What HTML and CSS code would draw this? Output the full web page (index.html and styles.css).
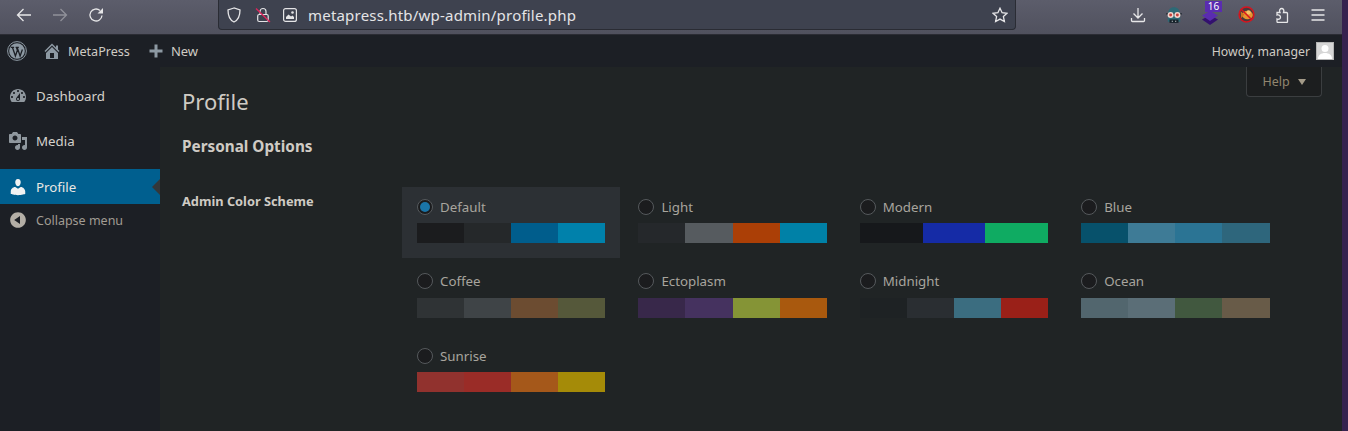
FILE: index.html

```html
<!DOCTYPE html>
<html lang="en">
<head>
<meta charset="UTF-8"/>
<title>Profile</title>
<link rel="stylesheet" href="styles.css">
</head>
<body>
<div id="wrapper">
	<div class="toolbar">
		<span class="slot"><svg width="16" height="16" viewBox="0 0 16 16" class="line"><path d="M15 8H1.500M7.500 2 1.500 8l6 6"/></svg></span>
		<span class="slot faded"><svg width="16" height="16" viewBox="0 0 16 16" class="line"><path d="M1 8h13.500M8.500 2l6 6-6 6"/></svg></span>
		<span class="slot"><svg width="16" height="16" viewBox="0 0 16 16" class="line"><path d="M14 8.500A6 6 0 1 1 12 3.500"/><path class="solid" d="M15 1v5.500H9.500z"/></svg></span>
		<div class="urlbar">
			<svg class="line shield" width="16" height="16" viewBox="0 0 16 16"><path d="M8 1 2 3c0 6 1.500 10 6 12 4.500-2 6-6 6-12z"/></svg>
			<svg class="lock" width="16" height="16" viewBox="0 0 16 16"><rect x="2.700" y="7.500" width="10.500" height="7" rx="1.500" fill="none" stroke="#e4e4e6" stroke-width="1.200"/><path d="M5 7.500V4.500a3 3 0 0 1 6 0v3" fill="none" stroke="#e4e4e6" stroke-width="1.200"/><path d="M1 1.500 15 15" stroke="#e0255d" stroke-width="1.300"/></svg>
			<svg class="picture" width="14" height="14" viewBox="0 0 14 14"><rect x=".6" y=".6" width="12.800" height="12.800" rx="2" fill="none" stroke="#e4e4e6" stroke-width="1.200"/><circle cx="9.500" cy="4.500" r="1.300" fill="#e4e4e6"/><path d="M3 11V9l2.500-2.500L8 8.500l1.500-1L11 9v2z" fill="#e4e4e6"/></svg>
			<span class="url">metapress.htb/wp-admin/profile.php</span>
			<svg class="line star" width="16" height="16" viewBox="0 0 16 16"><path d="m8 1.200 2.100 4.500 4.900.6-3.600 3.300 1 4.900L8 12.100l-4.400 2.400 1-4.900L1 6.300l4.900-.6z"/></svg>
		</div>
		<div class="tools">
			<span class="slot"><svg width="16" height="16" viewBox="0 0 16 16" class="line"><path d="M8 1v10M3.500 6.500 8 11l4.500-4.500M1.500 11v2.500q0 1 1 1h11q1 0 1-1V11"/></svg></span>
			<span class="slot"><svg width="18" height="18" viewBox="0 0 16 16"><path d="M2.500 8C2.500 3 5 1 8 1s5.500 2 5.500 7v6h-11z" fill="#2d6a76"/><rect x="4" y="12" width="8" height="3" fill="#16222a"/><path d="M6 13h1v1H6zm3 0h1v1H9z" fill="#cfd4d6"/><path d="M1 7h14" stroke="#16222a"/><circle cx="5" cy="8" r="2.700" fill="#f3d6cf"/><circle cx="11" cy="8" r="2.700" fill="#f3d6cf"/><circle cx="5" cy="8" r="1.300" fill="#c5403c"/><circle cx="11" cy="8" r="1.300" fill="#c5403c"/></svg></span>
			<span class="slot badged">
				<svg class="stack" width="16" height="14" viewBox="0 0 16 14"><path d="M8 4 16 8.500 8 14 0 8.500z" fill="#33116e"/><path d="M8 0 16 4.500 8 10 0 4.500z" fill="#5a2cb0"/></svg>
				<span class="badge">16</span>
			</span>
			<span class="slot"><svg width="17" height="17" viewBox="0 0 16 16"><circle cx="8" cy="8" r="7" fill="#4a3a3c"/><ellipse cx="9" cy="8.500" rx="5" ry="4" fill="#e8932e"/><path d="M2.500 5 6 8l-3 3.500z" fill="#d0731e"/><circle cx="10" cy="6" r="2" fill="#f4c06a"/><circle cx="8" cy="8" r="7" fill="none" stroke="#d8141e" stroke-width="1.400"/><path d="m3 3 10 10" stroke="#d8141e" stroke-width="1.400"/></svg></span>
			<span class="slot"><svg width="16" height="16" viewBox="0 0 16 16" class="line"><path d="M1.500 8V5.500h3c-1.200-2.500.2-4 1.700-4s2.800 1.500 1.800 4h3a1 1 0 0 1 1 1v8a1 1 0 0 1-1 1H2.500a1 1 0 0 1-1-1v-2.500c2.500.8 3.500-.5 3.500-1.700S4 7.200 1.500 8z" transform="translate(1.500 0)"/></svg></span>
			<span class="slot"><svg width="16" height="16" viewBox="0 0 16 16" class="line"><path d="M1.500 3h13M1.500 8h13M1.500 13h13"/></svg></span>
		</div>
	</div>

	<div class="adminbar">
		<div class="barleft">
			<svg class="wplogo" width="20" height="20" viewBox="0 0 20 20"><circle cx="10" cy="10" r="9.400" fill="none" stroke="#8d99a3" stroke-width="1"/><circle cx="10" cy="10" r="7.800" fill="#8d99a3"/><path d="M3.900 6.300h3.200M5.400 6.300l3 8.700 2-5.800-1-2.900M8.600 6.300h3.200M10.100 6.300l3 8.700 2.300-6.500" fill="none" stroke="#1c1f25" stroke-width="1.300"/></svg>
			<a class="baritem home"><svg width="20" height="20" viewBox="0 0 20 20"><path d="M16 8.500l1.530 1.530-1.060 1.060L10 4.620l-6.470 6.470-1.060-1.060L10 2.500l4 4v-2h2v4zm-6-2.460l6 5.990V18H4v-5.970zM12 17v-5H8v5h4z"/></svg>MetaPress</a>
			<a class="baritem new"><svg width="16" height="16" viewBox="0 0 16 16"><path d="M6.500 1.500h3v5h5v3h-5v5h-3v-5h-5v-3h5z"/></svg>New</a>
		</div>
		<div class="howdy">Howdy, manager
			<svg class="avatar" width="18" height="18" viewBox="0 0 18 18"><rect width="18" height="18" fill="#b5b5b5"/><rect x="1" y="1" width="16" height="16" fill="#d6d6d6"/><circle cx="9" cy="6.500" r="3.500" fill="#fff"/><path d="M2 17c0-4 3-6 7-6s7 2 7 6z" fill="#fff"/></svg>
		</div>
	</div>

	<div class="main">
		<div class="sidebar">
			<ul class="menu">
				<li><svg width="20" height="20" viewBox="0 0 20 20"><path d="M3.760 16h12.480c1.100-1.370 1.760-3.110 1.760-5 0-4.420-3.580-8-8-8s-8 3.580-8 8c0 1.890.66 3.630 1.760 5zM10 4c.55 0 1 .45 1 1s-.45 1-1 1-1-.45-1-1 .45-1 1-1zM6 6c.55 0 1 .45 1 1s-.45 1-1 1-1-.45-1-1 .45-1 1-1zm8 0c.55 0 1 .45 1 1s-.45 1-1 1-1-.45-1-1 .45-1 1-1zm-5.370 5.550L12 7v6c0 1.100-.9 2-2 2s-2-.9-2-2c0-.57.24-1.080.63-1.450zM4 10c.55 0 1 .45 1 1s-.45 1-1 1-1-.45-1-1 .45-1 1-1zm12 0c.55 0 1 .45 1 1s-.45 1-1 1-1-.45-1-1 .45-1 1-1zm-5 3c0-.55-.45-1-1-1s-1 .45-1 1 .45 1 1 1 1-.45 1-1z"/></svg>Dashboard</li>
				<li><svg width="20" height="20" viewBox="0 0 20 20"><path d="M13 11V4c0-.55-.45-1-1-1h-1.670L9 1H5L3.670 3H2c-.55 0-1 .45-1 1v7c0 .55.45 1 1 1h10c.55 0 1-.45 1-1zM7 4.500c1.380 0 2.500 1.120 2.500 2.500S8.380 9.500 7 9.500 4.500 8.380 4.500 7 5.620 4.500 7 4.500zM14 6h5v10.500c0 1.380-1.120 2.500-2.500 2.500S14 17.880 14 16.500s1.120-2.500 2.500-2.500c.17 0 .34.02.5.05V9h-3V6zm-4 8.050V13h2v3.500c0 1.380-1.120 2.500-2.500 2.500S7 17.880 7 16.500 8.120 14 9.500 14c.17 0 .34.02.5.05z"/></svg>Media</li>
				<li class="current"><svg width="20" height="20" viewBox="0 0 20 20"><path d="M10 9.250c-2.270 0-2.730-3.440-2.730-3.440C7 4.020 7.820 2 9.970 2c2.160 0 2.980 2.020 2.710 3.810 0 0-.41 3.440-2.680 3.440zm0 2.570L12.720 10c2.390 0 4.520 2.330 4.520 4.530v2.490s-3.650 1.130-7.240 1.130c-3.650 0-7.240-1.130-7.240-1.130v-2.490c0-2.250 1.940-4.480 4.470-4.480z"/></svg>Profile</li>
			</ul>
			<div class="collapse"><svg width="20" height="20" viewBox="0 0 20 20"><path d="M10 2.160c4.330 0 7.840 3.510 7.840 7.840s-3.510 7.840-7.840 7.840S2.160 14.330 2.160 10 5.710 2.160 10 2.160zm2 11.720V6.120L6.180 9.970z"/></svg>Collapse menu</div>
		</div>

		<div class="content">
			<div class="helpbar"><a class="help">Help<i class="caret"></i></a></div>
			<h1>Profile</h1>
			<h2>Personal Options</h2>
			<div class="formrow">
				<div class="rowlabel">Admin Color Scheme</div>
				<div class="schemes">
					<div class="scheme selected">
						<div class="schemename"><i class="radio on"></i>Default</div>
						<div class="swatches"><b class="c1"></b><b class="c2"></b><b class="c3"></b><b class="c4"></b></div>
					</div>
					<div class="scheme">
						<div class="schemename"><i class="radio"></i>Light</div>
						<div class="swatches"><b class="c5"></b><b class="c6"></b><b class="c7"></b><b class="c8"></b></div>
					</div>
					<div class="scheme">
						<div class="schemename"><i class="radio"></i>Modern</div>
						<div class="swatches"><b class="c9"></b><b class="c10"></b><b class="c11"></b></div>
					</div>
					<div class="scheme">
						<div class="schemename"><i class="radio"></i>Blue</div>
						<div class="swatches"><b class="c12"></b><b class="c13"></b><b class="c14"></b><b class="c15"></b></div>
					</div>
					<div class="scheme">
						<div class="schemename"><i class="radio"></i>Coffee</div>
						<div class="swatches"><b class="c16"></b><b class="c17"></b><b class="c18"></b><b class="c19"></b></div>
					</div>
					<div class="scheme">
						<div class="schemename"><i class="radio"></i>Ectoplasm</div>
						<div class="swatches"><b class="c20"></b><b class="c21"></b><b class="c22"></b><b class="c23"></b></div>
					</div>
					<div class="scheme">
						<div class="schemename"><i class="radio"></i>Midnight</div>
						<div class="swatches"><b class="c24"></b><b class="c25"></b><b class="c26"></b><b class="c27"></b></div>
					</div>
					<div class="scheme">
						<div class="schemename"><i class="radio"></i>Ocean</div>
						<div class="swatches"><b class="c28"></b><b class="c29"></b><b class="c30"></b><b class="c31"></b></div>
					</div>
					<div class="scheme">
						<div class="schemename"><i class="radio"></i>Sunrise</div>
						<div class="swatches"><b class="c32"></b><b class="c33"></b><b class="c34"></b><b class="c35"></b></div>
					</div>
				</div>
			</div>
		</div>
	</div>
</div>
</body>
</html>
```

FILE: styles.css

```css
html, body {
	margin:0;
	height:100%;
	background:#36224f;
	overflow:hidden;
}

#wrapper {
	width:1342px;
	height:431px;
	display:flex;
	flex-direction:column;
	font-family:"Noto Sans", sans-serif;
	color:#cfcbc4;
	font-size:13px;
}

/* browser chrome */
.toolbar {
	height:34px;
	flex:none;
	display:flex;
	align-items:flex-start;
	padding:0 6px;
	background:linear-gradient(#5c5d6b, #50515e);
	border-bottom:1px solid #2b2c34;
}

.slot {
	position:relative;
	width:36px;
	height:29px;
	display:flex;
	align-items:center;
	justify-content:center;
}

.slot svg {
	display:block;
}

.faded {
	opacity:.4;
}

.line {
	fill:none;
	stroke:#e6e6e8;
	stroke-width:1.3;
}

.line .solid {
	fill:#e6e6e8;
	stroke:none;
}

.urlbar {
	width:796px;
	height:29px;
	margin-left:104px;
	display:flex;
	align-items:center;
	background:#3e424f;
	border:1px solid #2a2c34;
	border-top:none;
	border-radius:0 0 4px 4px;
}

.shield {
	margin-left:7px;
}

.lock {
	margin-left:13px;
}

.picture {
	margin-left:12px;
}

.url {
	margin-left:11px;
	flex:1;
	font-size:15px;
	color:#e4e4e6;
	letter-spacing:.2px;
}

.star {
	margin-right:7px;
}

.tools {
	margin-left:auto;
	display:flex;
}

.stack {
	margin-top:7px;
}

.badge {
	position:absolute;
	left:13px;
	top:1px;
	width:17px;
	height:11px;
	background:#5a2cb0;
	color:#fff;
	font-size:10px;
	line-height:11px;
	text-align:center;
}

/* wp admin bar */
.adminbar {
	height:32px;
	flex:none;
	display:flex;
	align-items:center;
	justify-content:space-between;
	background:#1c1f25;
	color:#cfcbc4;
}

.barleft {
	display:flex;
	align-items:center;
}

.wplogo {
	margin-left:7px;
}

.baritem {
	display:flex;
	align-items:center;
}

.baritem svg {
	fill:#8d99a3;
}

.home {
	margin-left:15px;
	font-size:12.600px;
}

.home svg {
	margin-right:6px;
}

.new {
	margin-left:18px;
}

.new svg {
	margin-right:7px;
}

.howdy {
	display:flex;
	align-items:center;
	margin-right:8px;
	font-size:12.300px;
}

.avatar {
	margin-left:6px;
}

/* sidebar */
.main {
	flex:1;
	display:flex;
	min-height:0;
}

.sidebar {
	width:160px;
	flex:none;
	padding-top:11px;
	background:#1c1f25;
}

.menu {
	list-style-type:none;
	margin:0;
	padding:0;
	display:flex;
	flex-direction:column;
	gap:10px;
}

.menu li {
	position:relative;
	height:35px;
	display:flex;
	align-items:center;
	padding-left:8px;
	font-size:13.300px;
	color:#d5d2cc;
}

.menu li svg {
	fill:#8f979e;
	margin-right:8px;
}

.menu li.current {
	margin-top:1px;
	background:#005f8f;
	color:#e9e7e3;
}

.menu li.current svg {
	fill:#f2f2f2;
}

.menu li.current:after {
	content:"";
	position:absolute;
	right:0;
	top:10px;
	border:8px solid transparent;
	border-left:none;
	border-right-color:#33373a;
}

.collapse {
	height:32px;
	display:flex;
	align-items:center;
	padding-left:8px;
	font-size:12.500px;
	color:#a19c93;
}

.collapse svg {
	fill:#b3aea6;
	margin-right:8px;
}

/* content */
.content {
	flex:1;
	background:#202425;
	min-width:0;
	padding-left:22px;
}

.helpbar {
	height:0;
	display:flex;
	justify-content:flex-end;
	padding-right:20px;
}

.help {
	flex:none;
	width:74px;
	height:29px;
	display:flex;
	align-items:center;
	justify-content:center;
	gap:8px;
	background:#1c1e1f;
	border:1px solid #3b3e40;
	border-top:none;
	border-radius:0 0 4px 4px;
	color:#91866f;
	font-size:12.500px;
}

.caret {
	border:4.500px solid transparent;
	border-bottom:none;
	border-top:6px solid #a39a88;
}

h1 {
	margin:0;
	padding-top:19px;
	font-size:22px;
	line-height:30px;
	font-weight:400;
	color:#cfcbc4;
}

h2 {
	margin:19px 0 0;
	font-size:15.300px;
	line-height:22px;
	font-weight:700;
	color:#cfcbc4;
}

.formrow {
	display:flex;
	margin-top:30px;
}

.rowlabel {
	width:220px;
	flex:none;
	padding-top:5px;
	font-weight:700;
	font-size:12.800px;
	line-height:18px;
	color:#cfcbc4;
}

.schemes {
	display:grid;
	grid-template-columns:repeat(4, 218.450px);
	column-gap:2.950px;
	row-gap:3.500px;
}

.scheme {
	height:71px;
	box-sizing:border-box;
	padding:11px 15px 0;
}

.scheme.selected {
	background:#2c3034;
}

.schemename {
	height:17px;
	display:flex;
	align-items:center;
	color:#a8a59e;
	font-size:13.300px;
}

.radio {
	width:14px;
	height:14px;
	margin-right:7px;
	flex:none;
	position:relative;
	background:#1b1c1e;
	border:1px solid #55595c;
	border-radius:50%;
}

.radio.on:after {
	content:"";
	position:absolute;
	left:2px;
	top:2px;
	width:10px;
	height:10px;
	border-radius:50%;
	background:#1a75a8;
}

.swatches {
	display:flex;
	height:20px;
	margin-top:8px;
}

.swatches b {
	flex:1;
}

.c1 { background:#1b1c1e; }
.c2 { background:#25282a; }
.c3 { background:#005d8c; }
.c4 { background:#0081ab; }
.c5 { background:#25282b; }
.c6 { background:#565b5f; }
.c7 { background:#ab3f06; }
.c8 { background:#0081a7; }
.c9 { background:#16181b; }
.c10 { background:#152ba6; }
.c11 { background:#0fab62; }
.c12 { background:#07516b; }
.c13 { background:#3e7b96; }
.c14 { background:#2b7494; }
.c15 { background:#2e667c; }
.c16 { background:#2f3335; }
.c17 { background:#3f4447; }
.c18 { background:#6c4c31; }
.c19 { background:#55583a; }
.c20 { background:#38284a; }
.c21 { background:#45325f; }
.c22 { background:#859436; }
.c23 { background:#a9590e; }
.c24 { background:#1e2224; }
.c25 { background:#2a2e32; }
.c26 { background:#3b6d80; }
.c27 { background:#9a2018; }
.c28 { background:#52666e; }
.c29 { background:#5b6e77; }
.c30 { background:#41583f; }
.c31 { background:#685b48; }
.c32 { background:#91322e; }
.c33 { background:#9a2c27; }
.c34 { background:#a5581a; }
.c35 { background:#a58b08; }
```
